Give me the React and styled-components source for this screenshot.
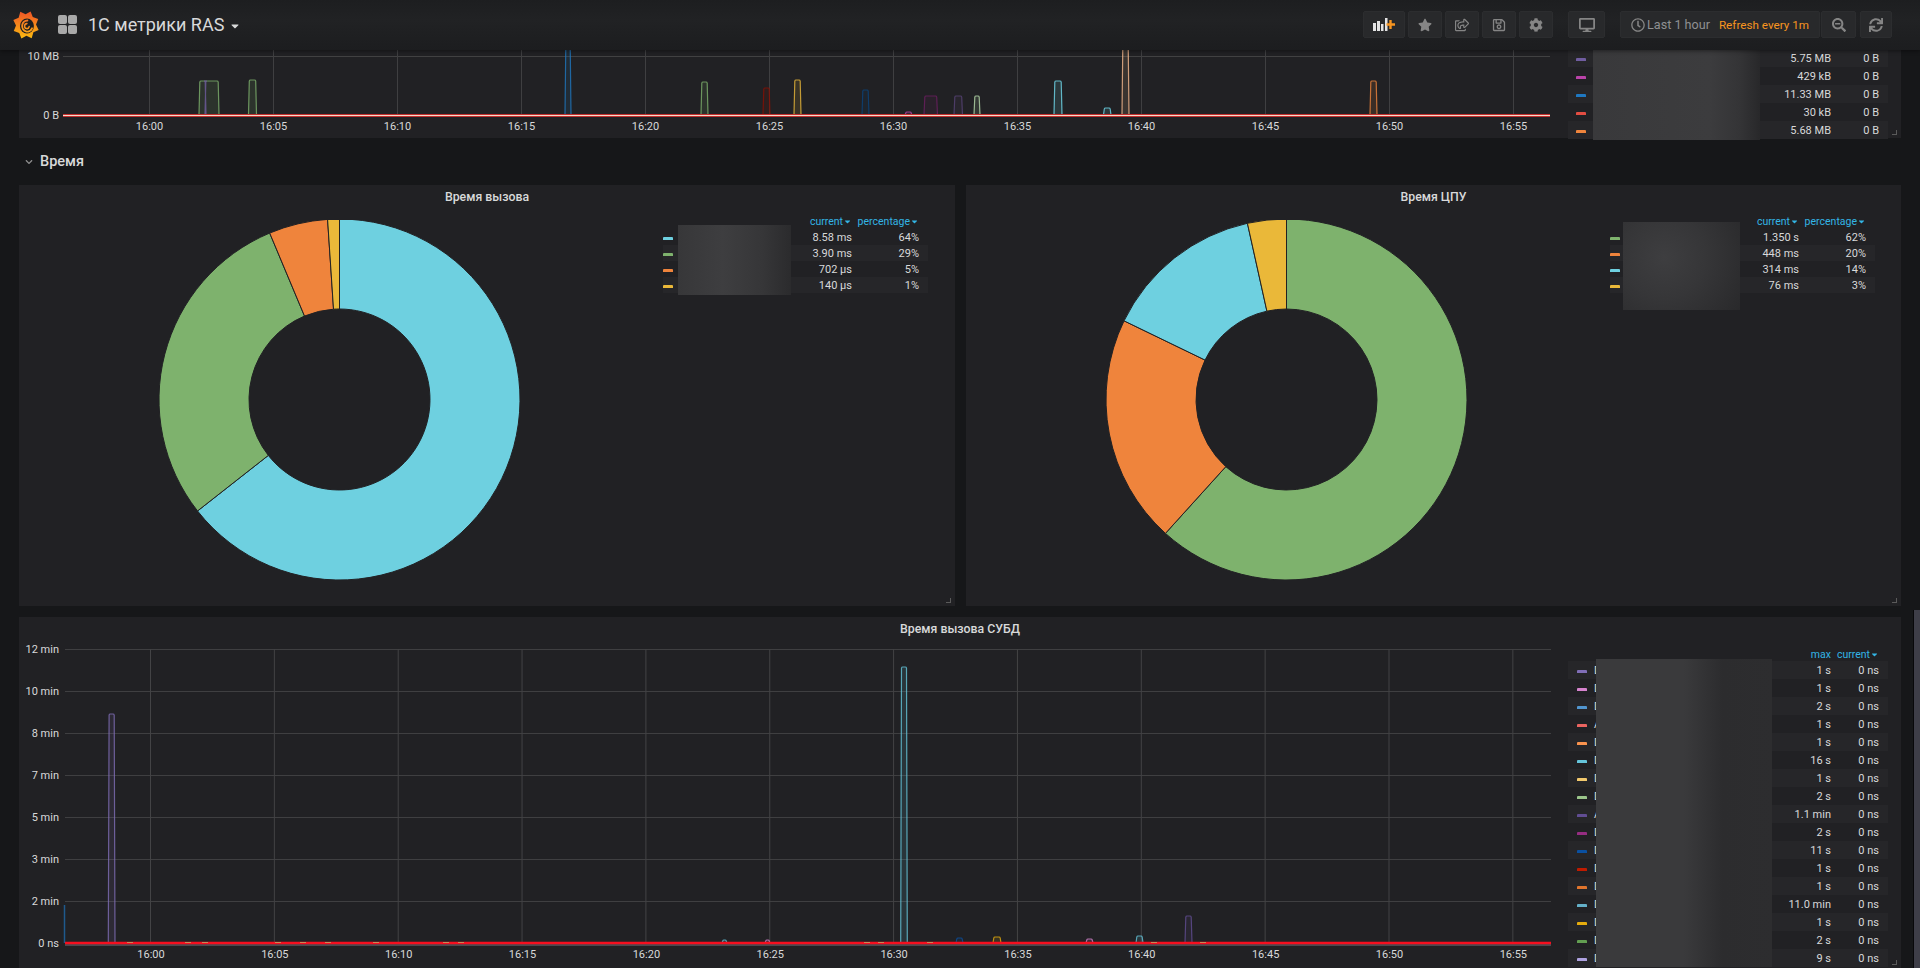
import React from 'react';
import styled, { createGlobalStyle } from 'styled-components';
import {
  FaStar,
  FaRegShareSquare,
  FaRegSave,
  FaCog,
  FaDesktop,
  FaRegClock,
  FaSearchMinus,
  FaSync,
  FaCaretDown,
  FaChevronDown,
} from 'react-icons/fa';

const GlobalStyle = createGlobalStyle`
  html, body {
    margin: 0;
    padding: 0;
    height: 100%;
    background: #161719;
    color: #d8d9da;
    font-family: Roboto, "Liberation Sans", sans-serif;
    overflow: hidden;
  }
`;

const Page = styled.div`
  position: relative;
  width: 1920px;
  height: 968px;
  overflow: hidden;
`;

const Navbar = styled.header`
  position: relative;
  z-index: 2;
  display: flex;
  align-items: center;
  height: 50px;
  padding: 0 28px 1px 13px;
  box-sizing: border-box;
  background: linear-gradient(180deg, #1d1e20 0%, #212224 40%, #1c1d1f 100%);
  box-shadow: 0 1px 4px rgba(0, 0, 0, 0.45);
`;

const DashIcon = styled.div`
  display: grid;
  grid-template-columns: 9px 9px;
  grid-template-rows: 9px 9px;
  gap: 1px;
  margin-left: 19px;
  span {
    background: #a9a9a9;
    border-radius: 2px;
  }
`;

const DashTitle = styled.div`
  margin-left: 11px;
  font-size: 18px;
  color: #d8d9da;
  white-space: nowrap;
`;

const TitleCaret = styled(FaCaretDown)`
  margin-left: 5px;
  font-size: 12px;
  vertical-align: -1px;
  color: #d8d9da;
`;

const NavRight = styled.div`
  display: flex;
  align-items: center;
  margin-left: auto;
`;

const NavGroup = styled.div`
  display: flex;
  gap: ${p => p.$gap || 3}px;
  margin-left: ${p => p.$left || 0}px;
`;

const NavButton = styled.div`
  display: flex;
  align-items: center;
  justify-content: ${p => (p.$start ? 'flex-start' : 'center')};
  gap: ${p => (p.$start ? 2 : 3)}px;
  width: ${p => p.$width}px;
  height: 27px;
  box-sizing: border-box;
  padding-left: ${p => (p.$start ? 10 : 0)}px;
  background: #28292b;
  border: 1px solid #2c2d2f;
  border-radius: 2px;
  color: #858585;
  font-size: ${p => p.$icon || 14}px;
`;

const TimeText = styled.span`
  font-size: 12.6px;
  color: #8f9092;
  white-space: nowrap;
`;

const RefreshText = styled.span`
  margin-left: 7px;
  font-size: 11.7px;
  color: #f79520;
  white-space: nowrap;
`;

const Main = styled.main`
  display: flex;
  flex-direction: column;
  height: 918px;
  padding: 0 19px;
`;

const Panel = styled.section`
  position: relative;
  background: #212124;
  height: ${p => p.$height}px;
  flex: none;
`;

const GraphBody = styled.div`
  display: flex;
  height: 100%;
`;

const OverlayBody = styled(GraphBody)`
  position: absolute;
  inset: 0;
`;

const ChartSvg = styled.svg`
  display: block;
  flex: none;
`;

const RowHeader = styled.div`
  display: flex;
  align-items: center;
  height: 47px;
  flex: none;
  padding: 0 0 0 6px;
  font-size: 14.5px;
  font-weight: 500;
  color: #d8d9da;
`;

const RowChevron = styled(FaChevronDown)`
  width: 8px;
  height: 8px;
  margin-right: 7px;
  color: #8e8e8e;
`;

const PieRow = styled.div`
  display: grid;
  grid-template-columns: 936px 935px;
  gap: 11px;
  flex: none;
  margin-bottom: 11px;
`;

const PanelTitle = styled.div`
  padding-top: 4px;
  height: 25px;
  box-sizing: border-box;
  text-align: center;
  font-size: 12.3px;
  font-weight: 500;
  line-height: 16px;
  color: #d8d9da;
`;

const PieBody = styled.div`
  display: flex;
`;

const PieSvg = styled.svg`
  display: block;
  flex: none;
  margin-top: 10px;
`;

const Legend = styled.div`
  position: relative;
  flex: none;
  width: ${p => p.$width}px;
  margin-top: ${p => p.$top}px;
  margin-left: ${p => p.$left || 0}px;
  font-size: 11px;
  color: #d8d9da;
`;

const LegendHeader = styled.div`
  display: grid;
  grid-template-columns: ${p => p.$columns};
  height: ${p => p.$height}px;
  padding-right: ${p => p.$pad}px;
  font-size: 10.5px;
  line-height: 15px;
  color: #33b5e5;
  text-align: right;
  white-space: nowrap;
`;

const LegendRow = styled.div`
  display: grid;
  grid-template-columns: ${p => p.$columns};
  align-items: center;
  height: ${p => p.$height}px;
  padding-right: ${p => p.$pad}px;
  text-align: right;
  white-space: nowrap;
  background: ${p => (p.$odd ? '#262629' : 'transparent')};
`;

const LegendName = styled.div`
  display: flex;
  align-items: center;
  justify-content: space-between;
  text-align: left;
  padding-left: ${p => p.$pad}px;
`;

const NameGroup = styled.div`
  display: flex;
  align-items: center;
`;

const Swatch = styled.i`
  display: block;
  width: 10px;
  height: 3px;
  margin-top: 2px;
  margin-right: 7px;
  border-radius: 1px 1px 0 0;
  background: ${p => p.$color};
`;

const HeaderCaret = styled(FaCaretDown)`
  width: 9px;
  height: 9px;
  vertical-align: -1px;
`;

const BlurBox = styled.div`
  position: absolute;
  left: ${p => p.$left}px;
  top: ${p => p.$top}px;
  width: ${p => p.$width}px;
  height: ${p => p.$height}px;
  background: ${p => p.$bg};
`;

const ResizeHandle = styled.div`
  position: absolute;
  right: 4px;
  bottom: 3px;
  width: 4px;
  height: 4px;
  border-right: 1px solid #5a5a5a;
  border-bottom: 1px solid #5a5a5a;
`;

const ScrollThumb = styled.div`
  position: absolute;
  right: 0;
  top: 610px;
  bottom: 0;
  width: 6px;
  background: #3e3e48;
  border-left: 1px solid #08080a;
`;

// grafana logo: a gear with a swirl in it
const gearPoints = () => {
  const pts = [];
  const teeth = 8;
  for (let i = 0; i < teeth * 2; i++) {
    const r = i % 2 === 0 ? 14.5 : 10.8;
    const a = (Math.PI * i) / teeth - Math.PI / 2 + 0.35;
    pts.push(`${(14 + r * Math.cos(a)).toFixed(2)},${(14 + r * Math.sin(a)).toFixed(2)}`);
  }
  return pts.join(' ');
};

const Logo = () => (
  <svg width="26" height="28" viewBox="0 0 28 28" preserveAspectRatio="none">
    <defs>
      <linearGradient id="logoGrad" x1="0" y1="0" x2="0" y2="1">
        <stop offset="0" stopColor="#ef5327" />
        <stop offset="1" stopColor="#fcbc10" />
      </linearGradient>
      <linearGradient id="swirlGrad" gradientUnits="userSpaceOnUse" x1="0" y1="6" x2="0" y2="22">
        <stop offset="0" stopColor="#f26a26" />
        <stop offset="1" stopColor="#f9a51a" />
      </linearGradient>
    </defs>
    <polygon points={gearPoints()} fill="url(#logoGrad)" />
    <circle cx="15" cy="15" r="7.5" fill="#1d1e20" />
    <path
      d="M15.5 9.4a5.6 5.6 0 1 0 5 8"
      fill="none"
      stroke="url(#swirlGrad)"
      strokeWidth="2"
      strokeLinecap="round"
    />
    <path
      d="M15 12.6a2.5 2.5 0 1 0 2.4 3"
      fill="none"
      stroke="url(#swirlGrad)"
      strokeWidth="1.6"
      strokeLinecap="round"
    />
  </svg>
);

const AddPanelIcon = () => (
  <svg width="22" height="13" viewBox="0 0 22 13">
    <g fill="#e3e3e3">
      <rect x="0" y="5" width="3" height="8" />
      <rect x="4" y="3" width="3" height="10" />
      <rect x="8" y="6" width="2.5" height="7" />
      <rect x="12" y="0" width="2.5" height="13" />
    </g>
    <path d="M17.5 2v9M13.5 6.5h8.5" stroke="#f79520" strokeWidth="2.4" fill="none" />
  </svg>
);

const COLORS = {
  blue: '#6ed0e0',
  green: '#7eb26d',
  orange: '#ef843c',
  yellow: '#eab839',
};

const slicePath = (cx, cy, r0, r1, from, to) => {
  const pt = (r, f) => {
    const a = f * 2 * Math.PI;
    return `${(cx + r * Math.sin(a)).toFixed(2)} ${(cy - r * Math.cos(a)).toFixed(2)}`;
  };
  const large = to - from > 0.5 ? 1 : 0;
  return `M${pt(r1, from)}A${r1} ${r1} 0 ${large} 1 ${pt(r1, to)}L${pt(r0, to)}A${r0} ${r0} 0 ${large} 0 ${pt(r0, from)}Z`;
};

const Donut = ({ rows }) => {
  const total = rows.reduce((s, r) => s + r.raw, 0);
  let acc = 0;
  return (
    <PieSvg width="641" height="386" viewBox="0 0 641 386">
      {rows.map(r => {
        const from = acc;
        acc += r.raw / total;
        return (
          <path
            key={r.color}
            d={slicePath(320.5, 179.5, 90.5, 180.5, from, acc)}
            fill={r.color}
            stroke="#212124"
            strokeWidth="1"
          />
        );
      })}
    </PieSvg>
  );
};

const bar = (x0, x1, top, base) =>
  `M${x0} ${base}L${x0 + 0.8} ${top + 1}Q${x0 + 1} ${top} ${x0 + 2} ${top}L${x1 - 2} ${top}Q${x1 - 1} ${top} ${x1 - 0.8} ${top + 1}L${x1} ${base}`;

const Bars = ({ items, base }) =>
  items.map(b => (
    <path
      key={`${b.x0}-${b.top}`}
      d={bar(b.x0, b.x1, b.top, base)}
      stroke={b.color}
      strokeWidth="1.2"
      fill={b.color}
      fillOpacity="0.12"
      strokeOpacity="0.8"
    />
  ));

const AxisText = styled.text`
  font-family: Roboto, "Liberation Sans", sans-serif;
  font-size: 11px;
  fill: #d8d9da;
`;

const times = [
  '16:00', '16:05', '16:10', '16:15', '16:20', '16:25',
  '16:30', '16:35', '16:40', '16:45', '16:50', '16:55',
];

const topBars = [
  { x0: 199, x1: 219, top: 81, color: '#7eb26d' },
  { x0: 205, x1: 206, top: 81, color: '#705da0' },
  { x0: 248.5, x1: 256.5, top: 80, color: '#7eb26d' },
  { x0: 565, x1: 571, top: 44, color: '#1f78c1' },
  { x0: 701, x1: 708, top: 82, color: '#7eb26d' },
  { x0: 763, x1: 770, top: 88, color: '#890f02' },
  { x0: 794, x1: 801, top: 80, color: '#eab839' },
  { x0: 862, x1: 869, top: 90, color: '#0a437c' },
  { x0: 905, x1: 912, top: 112, color: '#ba43a9' },
  { x0: 924, x1: 937.5, top: 96, color: '#6d1f62' },
  { x0: 954, x1: 962.5, top: 96, color: '#584477' },
  { x0: 974, x1: 980, top: 96, color: '#b7dbab' },
  { x0: 1054, x1: 1062, top: 81, color: '#70dbed' },
  { x0: 1103.5, x1: 1111, top: 108, color: '#70dbed' },
  { x0: 1122, x1: 1129, top: 44, color: '#f9ba8f' },
  { x0: 1370, x1: 1377, top: 81, color: '#ef843c' },
];

const bottomBars = [
  { x0: 108.3, x1: 115, top: 714, color: '#806eb7' },
  { x0: 900.7, x1: 907.3, top: 667, color: '#65c5db' },
  { x0: 956, x1: 963, top: 938, color: '#0a50a1' },
  { x0: 993, x1: 1001, top: 937, color: '#e5ac0e' },
  { x0: 1086, x1: 1093, top: 939, color: '#d683ce' },
  { x0: 1136, x1: 1143, top: 936, color: '#65c5db' },
  { x0: 1185, x1: 1192, top: 916, color: '#614d93' },
  { x0: 722, x1: 727, top: 940, color: '#65c5db' },
  { x0: 765, x1: 770, top: 940, color: '#d683ce' },
];

const bottomTicks = [
  127, 185, 202, 275, 300, 325, 373, 443, 458, 864, 878, 927, 1151, 1200,
];

const TopChart = () => (
  <ChartSvg width="1549" height="88" viewBox="19 50 1549 88">
    <line x1="63" x2="1550" y1="56.5" y2="56.5" stroke="#414142" />
    {times.map((t, i) => (
      <g key={t}>
        <line x1={149.5 + 124 * i} x2={149.5 + 124 * i} y1="50" y2="115" stroke="#3f3f41" />
        <AxisText x={149.5 + 124 * i} y="130" textAnchor="middle">{t}</AxisText>
      </g>
    ))}
    <AxisText x="59" y="60" textAnchor="end">10 MB</AxisText>
    <AxisText x="59" y="119" textAnchor="end">0 B</AxisText>
    <Bars items={topBars} base={115} />
    <line x1="63" x2="1550" y1="115.5" y2="115.5" stroke="#c42f2f" strokeWidth="3" />
    <line x1="63" x2="1550" y1="115.5" y2="115.5" stroke="#f4dccb" strokeWidth="1" />
  </ChartSvg>
);

const bottomLabels = ['12 min', '10 min', '8 min', '7 min', '5 min', '3 min', '2 min', '0 ns'];

const BottomChart = () => (
  <ChartSvg width="1549" height="351" viewBox="19 617 1549 351">
    {bottomLabels.map((l, i) => (
      <g key={l}>
        {i < 7 && (
          <line x1="65" x2="1551" y1={649.5 + 42 * i} y2={649.5 + 42 * i} stroke="#3f3f41" />
        )}
        <AxisText x="59" y={653 + 42 * i} textAnchor="end">{l}</AxisText>
      </g>
    ))}
    {times.map((t, i) => (
      <g key={t}>
        <line x1={150.5 + 123.85 * i} x2={150.5 + 123.85 * i} y1="649" y2="943" stroke="#434345" />
        <AxisText x={151 + 123.85 * i} y="958" textAnchor="middle">{t}</AxisText>
      </g>
    ))}
    <line x1="64.5" x2="64.5" y1="905" y2="943" stroke="#1f5a8c" strokeWidth="1.5" />
    <Bars items={bottomBars} base={943} />
    <line x1="65" x2="1551" y1="945" y2="945" stroke="#77727a" strokeWidth="1" />
    <line x1="65" x2="1551" y1="943" y2="943" stroke="#f50f1f" strokeWidth="2.4" />
    {bottomTicks.map(x => (
      <line key={x} x1={x} x2={x + 6} y1="942.5" y2="942.5" stroke="#c98a55" strokeWidth="1" />
    ))}
  </ChartSvg>
);

const leftRows = [
  { color: COLORS.blue, raw: 8.58, value: '8.58 ms', pct: '64%' },
  { color: COLORS.green, raw: 3.9, value: '3.90 ms', pct: '29%' },
  { color: COLORS.orange, raw: 0.702, value: '702 µs', pct: '5%' },
  { color: COLORS.yellow, raw: 0.14, value: '140 µs', pct: '1%' },
];

const rightRows = [
  { color: COLORS.green, raw: 1.35, value: '1.350 s', pct: '62%' },
  { color: COLORS.orange, raw: 0.448, value: '448 ms', pct: '20%' },
  { color: COLORS.blue, raw: 0.314, value: '314 ms', pct: '14%' },
  { color: COLORS.yellow, raw: 0.076, value: '76 ms', pct: '3%' },
];

const topLegend = [
  { color: '#705da0', value: '5.75 MB' },
  { color: '#ba43a9', value: '429 kB' },
  { color: '#1f78c1', value: '11.33 MB' },
  { color: '#e24d42', value: '30 kB' },
  { color: '#ef843c', value: '5.68 MB' },
];

const bottomLegend = [
  { color: '#806eb7', name: 'D', max: '1 s' },
  { color: '#d683ce', name: 'D', max: '1 s' },
  { color: '#5195ce', name: 'D', max: '2 s' },
  { color: '#ea6460', name: 'A', max: '1 s' },
  { color: '#f9934e', name: 'D', max: '1 s' },
  { color: '#65c5db', name: 'D', max: '16 s' },
  { color: '#f2c96d', name: 'D', max: '1 s' },
  { color: '#9ac48a', name: 'D', max: '2 s' },
  { color: '#614d93', name: 'A', max: '1.1 min' },
  { color: '#962d82', name: 'D', max: '2 s' },
  { color: '#0a50a1', name: 'D', max: '11 s' },
  { color: '#bf1b00', name: 'D', max: '1 s' },
  { color: '#e0752d', name: 'D', max: '1 s' },
  { color: '#64b0c8', name: 'D', max: '11.0 min' },
  { color: '#e5ac0e', name: 'D', max: '1 s' },
  { color: '#629e51', name: 'D', max: '2 s' },
  { color: '#aea2e0', name: 'D', max: '9 s' },
];

const PieLegend = ({ rows, blur }) => (
  <Legend $width={265} $top={4} $left={3}>
    <LegendHeader $columns="1fr 67px" $height={15} $pad={9}>
      <div>current<HeaderCaret /></div>
      <div>percentage<HeaderCaret /></div>
    </LegendHeader>
    {rows.map((r, i) => (
      <LegendRow key={r.color} $columns="1fr 67px" $height={16} $pad={9} $odd={i % 2 === 1}>
        <LegendName $pad={0}>
          <Swatch $color={r.color} />
          {r.value}
        </LegendName>
        <div>{r.pct}</div>
      </LegendRow>
    ))}
    <BlurBox {...blur} />
  </Legend>
);

const PiePanel = ({ title, rows, blur }) => (
  <Panel $height={421}>
    <PanelTitle>{title}</PanelTitle>
    <PieBody>
      <Donut rows={rows} />
      <PieLegend rows={rows} blur={blur} />
    </PieBody>
    <ResizeHandle />
  </Panel>
);

export default function App() {
  return (
    <Page>
      <GlobalStyle />
      <Navbar>
        <Logo />
        <DashIcon><span /><span /><span /><span /></DashIcon>
        <DashTitle>1С метрики RAS<TitleCaret /></DashTitle>
        <NavRight>
          <NavGroup>
            <NavButton $width={42}><AddPanelIcon /></NavButton>
            <NavButton $width={34}><FaStar /></NavButton>
            <NavButton $width={34}><FaRegShareSquare /></NavButton>
            <NavButton $width={34}><FaRegSave /></NavButton>
            <NavButton $width={34}><FaCog /></NavButton>
          </NavGroup>
          <NavGroup $left={15}>
            <NavButton $width={37} $icon={16}><FaDesktop /></NavButton>
          </NavGroup>
          <NavGroup $left={15} $gap={1}>
            <NavButton $width={200} $start>
              <FaRegClock />
              <TimeText>Last 1 hour</TimeText>
              <RefreshText>Refresh every 1m</RefreshText>
            </NavButton>
            <NavButton $width={35}><FaSearchMinus /></NavButton>
          </NavGroup>
          <NavGroup $left={4}>
            <NavButton $width={32}><FaSync /></NavButton>
          </NavGroup>
        </NavRight>
      </Navbar>

      <Main>
        <Panel $height={88}>
          <GraphBody>
            <TopChart />
            <Legend $width={320} $top={-1}>
              {topLegend.map((r, i) => (
                <LegendRow key={r.color} $columns="1fr 48px" $height={18} $pad={9} $odd={i % 2 === 0}>
                  <LegendName $pad={8}>
                    <Swatch $color={r.color} />
                    <span>{r.value}</span>
                  </LegendName>
                  <div>0 B</div>
                </LegendRow>
              ))}
              <BlurBox
                $left={25}
                $top={0}
                $width={167}
                $height={91}
                $bg="linear-gradient(90deg, #39393b 0%, #3c3c3e 70%, #343436 88%, #28282a 100%)"
              />
            </Legend>
          </GraphBody>
          <ResizeHandle />
        </Panel>

        <RowHeader>
          <RowChevron />
          Время
        </RowHeader>

        <PieRow>
          <PiePanel
            title="Время вызова"
            rows={leftRows}
            blur={{
              $left: 15,
              $top: 11,
              $width: 113,
              $height: 70,
              $bg: 'linear-gradient(90deg, #373739 0%, #3e3e40 40%, #363638 75%, #2b2b2d 100%)',
            }}
          />
          <PiePanel
            title="Время ЦПУ"
            rows={rightRows}
            blur={{
              $left: 13,
              $top: 8,
              $width: 117,
              $height: 88,
              $bg: 'radial-gradient(circle at 35% 40%, #3e3e40 0%, #363638 45%, #29292b 100%)',
            }}
          />
        </PieRow>

        <Panel $height={351}>
          <PanelTitle>Время вызова СУБД</PanelTitle>
          <OverlayBody>
            <BottomChart />
            <Legend $width={320} $top={30}>
              <LegendHeader $columns="1fr 48px" $height={14} $pad={9}>
                <div>max</div>
                <div>current<HeaderCaret /></div>
              </LegendHeader>
              {bottomLegend.map((r, i) => (
                <LegendRow key={r.color} $columns="1fr 48px" $height={18} $pad={9} $odd={i % 2 === 0}>
                  <LegendName $pad={9}>
                    <NameGroup>
                      <Swatch $color={r.color} />
                      {r.name}
                    </NameGroup>
                    <span>{r.max}</span>
                  </LegendName>
                  <div>0 ns</div>
                </LegendRow>
              ))}
              <BlurBox
                $left={28}
                $top={12}
                $width={176}
                $height={308}
                $bg="linear-gradient(90deg, #3a3a3c 0%, #3a3a3c 50%, #2c2c2e 72%, #2d2d2f 100%)"
              />
            </Legend>
          </OverlayBody>
          <ResizeHandle />
        </Panel>
      </Main>
      <ScrollThumb />
    </Page>
  );
}
